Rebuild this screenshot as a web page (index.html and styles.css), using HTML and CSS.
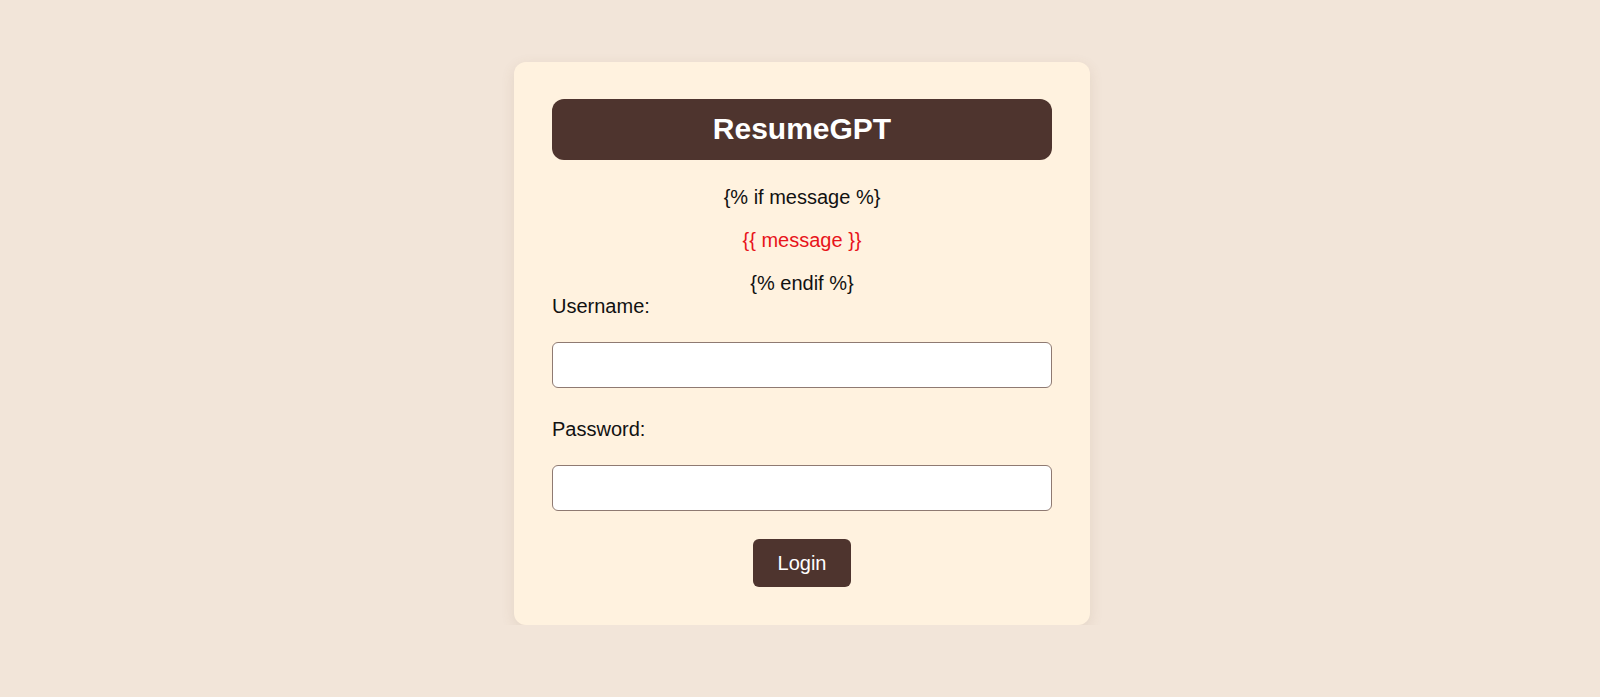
FILE: index.html
```html
<!DOCTYPE html>
<html lang="en">
<head>
<meta charset="utf-8">
<title>ResumeGPT - Login</title>
<link rel="stylesheet" href="styles.css">
</head>
<body>
<main class="page">
  <section class="card">
    <h1 class="brand">ResumeGPT</h1>
    <p class="tpl">{% if message %}</p>
    <p class="error">{{ message }}</p>
    <p class="tpl">{% endif %}</p>
    <form class="form">
      <label class="label" for="username">Username:</label>
      <input class="field field-first" id="username" type="text" name="username">
      <label class="label" for="password">Password:</label>
      <input class="field" id="password" type="password" name="password">
      <div class="actions">
        <button class="btn" type="submit">Login</button>
      </div>
    </form>
  </section>
</main>
</body>
</html>
```
FILE: styles.css
```css
html, body {
  margin: 0;
  padding: 0;
}
body {
  background: #f2e5d9;
  font-family: "Liberation Sans", Arial, sans-serif;
  color: #111;
  font-size: 20px;
  line-height: 23px;
}
.page {
  display: flex;
  justify-content: center;
  padding: 62px 0 0 4px;
}
.card {
  width: 500px;
  padding: 37px 38px 38px;
  background: #fff2df;
  border-radius: 12px;
  box-shadow: 0 4px 14px rgba(120, 90, 60, 0.12);
  text-align: center;
}
.brand {
  margin: 0 0 26px;
  padding: 13px 0 14px;
  background: #4e342e;
  color: #fff;
  border-radius: 12px;
  font-size: 30px;
  line-height: 34px;
  font-weight: bold;
}
.tpl {
  margin: 0;
}
.error {
  margin: 20px 0;
  color: #e8141a;
}
.form {
  display: flex;
  flex-direction: column;
  text-align: left;
}
.label {
  display: block;
}
.field {
  box-sizing: border-box;
  width: 100%;
  height: 46px;
  margin: 24px 0 30px;
  border: 1px solid #8f7a72;
  border-radius: 6px;
  background: #fff;
  font-family: inherit;
  font-size: 18px;
  padding: 0 12px;
}
.field:last-of-type {
  margin-bottom: 28px;
}
.actions {
  display: flex;
  justify-content: center;
}
.btn {
  padding: 12px 25px;
  border: 0;
  border-radius: 6px;
  background: #4e342e;
  color: #fff;
  font-family: inherit;
  font-size: 20px;
  line-height: 24px;
  cursor: pointer;
}
```
